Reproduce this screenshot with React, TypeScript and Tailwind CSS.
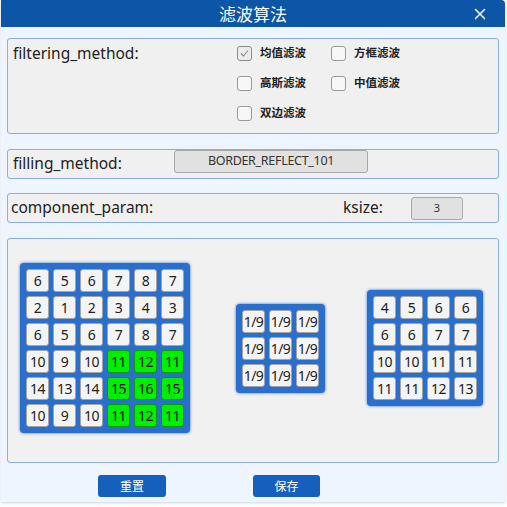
import { X } from "lucide-react";

const bigMatrix = [
  [6, 5, 6, 7, 8, 7],
  [2, 1, 2, 3, 4, 3],
  [6, 5, 6, 7, 8, 7],
  [10, 9, 10, 11, 12, 11],
  [14, 13, 14, 15, 16, 15],
  [10, 9, 10, 11, 12, 11],
];

const kernel = [
  ["1/9", "1/9", "1/9"],
  ["1/9", "1/9", "1/9"],
  ["1/9", "1/9", "1/9"],
];

const result = [
  [4, 5, 6, 6],
  [6, 6, 7, 7],
  [10, 10, 11, 11],
  [11, 11, 12, 13],
];

const filters = [
  { label: "均值滤波", checked: true },
  { label: "方框滤波", checked: false },
  { label: "高斯滤波", checked: false },
  { label: "中值滤波", checked: false },
  { label: "双边滤波", checked: false },
];

const cjk = "font-['Noto_Sans_CJK_SC',sans-serif]";
const latin = "font-['Noto_Sans','Noto_Sans_CJK_SC',sans-serif]";

function Checkbox({ label, checked }: { label: string; checked: boolean }) {
  return (
    <div className="flex items-center gap-[8px] h-[30px]">
      <div
        className={
          "w-[15px] h-[15px] rounded-[3px] border flex items-center justify-center " +
          (checked ? "bg-[#ececec] border-[#8c8c8c]" : "bg-[#f7f7f7] border-[#9a9a9a]")
        }
      >
        {checked && (
          <svg width="11" height="11" viewBox="0 0 11 11">
            <path d="M2 5.5 L4.5 8 L9 2.5" fill="none" stroke="#8a8a8a" strokeWidth="1.1" />
          </svg>
        )}
      </div>
      <span className={`text-[11.5px] font-semibold text-[#222] ${cjk}`}>{label}</span>
    </div>
  );
}

function Matrix({ rows }: { rows: (number | string)[][] }) {
  return (
    <div className="bg-[#2a6fcb] rounded-[4px] p-[6px] shadow-[0_0_3px_#2a6fcb] flex flex-col gap-[4px]">
      {rows.map((row, r) => (
        <div key={r} className="flex gap-[4px]">
          {row.map((v, c) => {
            const green = rows.length === 6 && r >= 3 && c >= 3;
            return (
              <div
                key={c}
                className={
                  "w-[23px] h-[23px] rounded-[3px] flex items-center justify-center text-[14px] tracking-[-0.5px] border " +
                  (green ? "bg-[#00ee00] border-[#0a9a0a] text-[#111]" : "bg-[#f4f4f4] border-[#a4a4a4] text-[#222]")
                }
              >
                {v}
              </div>
            );
          })}
        </div>
      ))}
    </div>
  );
}

export default function App() {
  return (
    <div className={`w-[507px] h-[507px] bg-white ${latin}`}>
      <div className="ml-[1px] w-[504px] h-[502px] bg-[#eff5fe] rounded-tr-[4px] shadow-[0_1px_3px_rgba(100,130,180,0.35)] flex flex-col">
        <div className="h-[27px] bg-[#0d55a6] rounded-tr-[4px] flex items-center relative">
          <span className={`flex-1 text-center text-white text-[17px] ${cjk}`}>滤波算法</span>
          <X className="absolute right-[16px] top-[5px] text-white" size={18} strokeWidth={2} />
        </div>

        <div className="px-[6px] pt-[11px] flex flex-col">
          <div className="h-[96px] bg-[#f0f0f0] border border-[#86aeea] rounded-[3px] flex items-start">
            <span className="text-[15.5px] text-[#222] pl-[5px] pt-[3px] w-[229px]">filtering_method:</span>
            <div className="grid grid-cols-[94px_auto] content-start mt-[-1px]">
              {filters.map((f) => (
                <Checkbox key={f.label} label={f.label} checked={f.checked} />
              ))}
            </div>
          </div>

          <div className="mt-[15px] h-[30px] bg-[#f0f0f0] border border-[#86aeea] rounded-[3px] flex items-center">
            <span className="text-[15.5px] text-[#222] pl-[5px] w-[166px]">filling_method:</span>
            <div className="w-[194px] h-[23px] mt-[-5px] bg-[#e1e1e1] border border-[#a8a8a8] rounded-[3px] flex items-center justify-center text-[12.5px] tracking-[-0.3px] text-[#333]">
              BORDER_REFLECT_101
            </div>
          </div>

          <div className="mt-[14px] h-[30px] bg-[#f0f0f0] border border-[#86aeea] rounded-[3px] flex items-center">
            <span className="text-[15.5px] text-[#222] pl-[3px] w-[335px]">component_param:</span>
            <span className="text-[15.5px] text-[#222] w-[68px]">ksize:</span>
            <div className="w-[52px] h-[23px] bg-[#e1e1e1] border border-[#a8a8a8] rounded-[3px] flex items-center justify-center text-[11px] text-[#333]">
              3
            </div>
          </div>

          <div className="mt-[15px] h-[225px] bg-[#f1f1f1] border border-[#86aeea] rounded-[3px] flex items-center pl-[12px] pb-[5px]">
            <Matrix rows={bigMatrix} />
            <div className="ml-[46px]">
              <Matrix rows={kernel} />
            </div>
            <div className="ml-[42px]">
              <Matrix rows={result} />
            </div>
          </div>
        </div>

        <div className="flex mt-[12px]">
          <button className={`ml-[97px] w-[68px] h-[22px] bg-[#1560bd] rounded-[3px] text-white text-[12px] ${cjk}`}>
            重置
          </button>
          <button className={`ml-[87px] w-[67px] h-[22px] bg-[#1560bd] rounded-[3px] text-white text-[12px] ${cjk}`}>
            保存
          </button>
        </div>
      </div>
    </div>
  );
}
